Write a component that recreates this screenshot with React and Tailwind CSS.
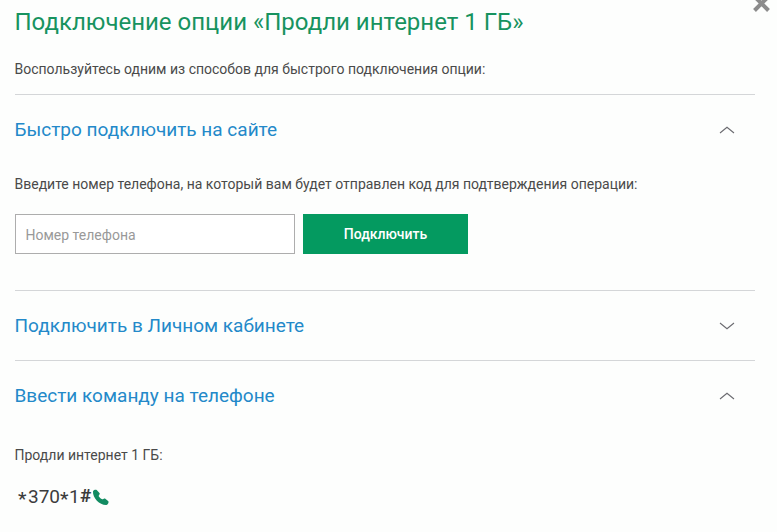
import React from 'react';

function Chevron({ open }) {
  return (
    <svg className="mr-[20px] h-[8px] w-[16px]" viewBox="0 0 16 8" fill="none" stroke="#6b6b70" strokeWidth="1.1">
      <path d={open ? 'M1 7L8 1.3L15 7' : 'M1 1L8 6.7L15 1'} />
    </svg>
  );
}

function SectionHeader({ title, open }) {
  return (
    <div className="flex h-[70px] items-center justify-between border-t border-[#d4d6d8]">
      <h2 className="-ml-[0.5px] text-[19px] leading-6 text-[#2389c9]">{title}</h2>
      <Chevron open={open} />
    </div>
  );
}

export default function App() {
  return (
    <div
      className="relative h-[532px] w-[777px] overflow-hidden bg-[#fdfefd] pl-[15px] pr-[22px] text-[#4a4a4a]"
      style={{ fontFamily: 'Roboto, sans-serif' }}
    >
      <svg className="absolute left-[753px] top-[-5px] h-[17px] w-[17px]" viewBox="0 0 17 17" stroke="#8c8c8c" strokeWidth="4">
        <path d="M1.5 1.5L15.5 15.5M15.5 1.5L1.5 15.5" />
      </svg>

      <div className="h-[94px] pt-[7px]">
        <h1 className="-ml-[0.5px] text-[24px] leading-[30px] text-[#17935f]">Подключение опции «Продли интернет 1 ГБ»</h1>
        <p className="-ml-[0.5px] mt-[22px] text-[14px] leading-5">
          Воспользуйтесь одним из способов для быстрого подключения опции:
        </p>
      </div>

      <section className="h-[196px]">
        <SectionHeader title="Быстро подключить на сайте" open />
        <p className="-ml-[0.5px] mt-[10px] text-[14px] leading-5">
          Введите номер телефона, на который вам будет отправлен код для подтверждения операции:
        </p>
        <form className="mt-5 flex gap-2">
          <input
            className="h-10 w-[280px] border border-[#adadad] bg-white px-[9.5px] pt-[2px] text-[14px] placeholder:text-[#999]"
            placeholder="Номер телефона"
          />
          <button type="button" className="h-10 w-[165px] bg-[#049a60] text-[14px] font-medium text-white">
            Подключить
          </button>
        </form>
      </section>

      <SectionHeader title="Подключить в Личном кабинете" />

      <section>
        <SectionHeader title="Ввести команду на телефоне" open />
        <p className="-ml-[0.5px] mt-[15px] text-[14px] leading-5">Продли интернет 1 ГБ:</p>
        <div className="mt-5 flex items-center pl-[3px]">
          <span className="flex text-[19px] leading-6 text-[#3c3c3c]">
            <span className="w-[9px] pt-[2px] font-medium">*</span>
            <span className="w-[33px] pl-px">370</span>
            <span className="w-[8px] pt-[2px] font-medium">*</span>
            <span className="w-[12px] pl-px">1</span>
            <span className="-mt-px w-[12px] text-[19px] font-bold">#</span>
          </span>
          <svg className="mb-[2px] h-[17px] w-[17px]" viewBox="0 0 17 17" fill="#128c62">
            <path d="M1 2.2C2 .8 3.6 .4 4.7 1L7.7 4.2C8 5.3 6.8 6.3 6.6 6.9C7.4 8.5 8.7 9.6 10.3 10.3C11.2 10.2 11.9 9.3 13 9.5L16.4 12.2C17 13.8 15.8 15.3 14.5 16C8 16.4 .4 9.2 1 2.2Z" />
          </svg>
        </div>
      </section>
    </div>
  );
}
